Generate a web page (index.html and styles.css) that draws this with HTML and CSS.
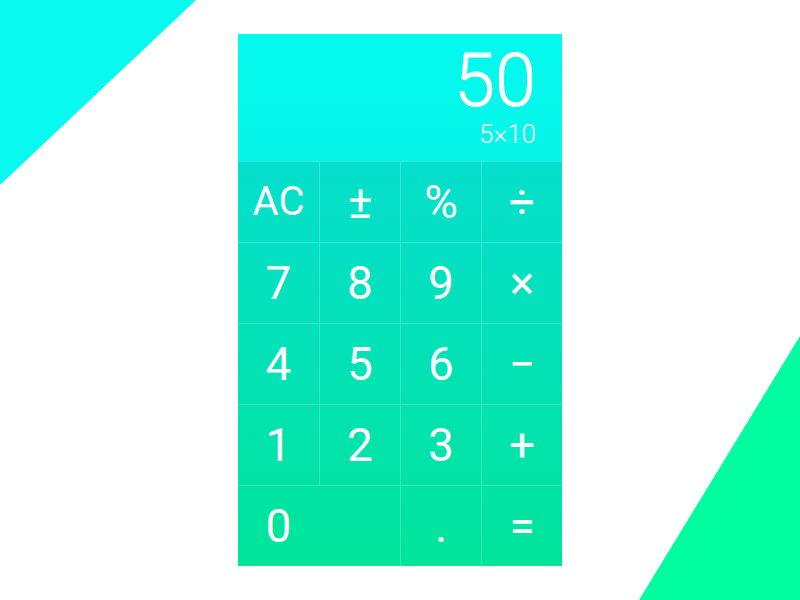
FILE: index.html
```html
<!DOCTYPE html>
<html lang="en">
<head>
<meta charset="utf-8">
<title>Calculator</title>
<link rel="stylesheet" href="styles.css">
</head>
<body>
<svg class="backdrop" width="800" height="600" viewBox="0 0 800 600" aria-hidden="true">
  <polygon points="0,0 196,0 0,185" fill="#07F9F0"/>
  <polygon points="800,336 800,600 639,600" fill="#00FEA0"/>
</svg>
<main class="calc">
  <section class="display">
    <div class="result">50</div>
    <div class="expr">5×10</div>
  </section>
  <section class="keys">
    <button class="key key-ac">AC</button>
    <button class="key">±</button>
    <button class="key">%</button>
    <button class="key">÷</button>
    <button class="key">7</button>
    <button class="key">8</button>
    <button class="key">9</button>
    <button class="key">×</button>
    <button class="key">4</button>
    <button class="key">5</button>
    <button class="key">6</button>
    <button class="key">−</button>
    <button class="key">1</button>
    <button class="key">2</button>
    <button class="key">3</button>
    <button class="key">+</button>
    <button class="key key-zero"><span class="zero-label">0</span></button>
    <button class="key">.</button>
    <button class="key">=</button>
  </section>
</main>
</body>
</html>
```

FILE: styles.css
```css
html, body {
  margin: 0;
  padding: 0;
}

body {
  width: 800px;
  height: 600px;
  background: #ffffff;
  position: relative;
  overflow: hidden;
  font-family: Roboto, "Liberation Sans", sans-serif;
}

.backdrop {
  position: absolute;
  left: 0;
  top: 0;
  z-index: 0;
}

.calc {
  position: relative;
  z-index: 1;
  width: 326px;
  height: 534px;
  margin: 33px 0 0 237px;
  display: flex;
  flex-direction: column;
  box-sizing: border-box;
  border: 1px solid rgba(255, 255, 255, 0.35);
  color: #ffffff;
}

.display {
  height: 127px;
  box-sizing: border-box;
  padding: 12px 26px 11px 20px;
  display: flex;
  flex-direction: column;
  align-items: flex-end;
  background: linear-gradient(180deg, #03FAEF 0%, #06F5E8 100%);
}

.result {
  font-size: 74px;
  line-height: 0.95;
  font-weight: 300;
  -webkit-text-stroke: 0.8px #ffffff;
}

.expr {
  margin-top: 7px;
  font-size: 26px;
  line-height: 0.9;
  font-weight: 300;
}

.keys {
  flex: 1;
  display: grid;
  grid-template-columns: repeat(4, 1fr);
  grid-template-rows: repeat(5, 1fr);
  background: linear-gradient(180deg, #05DFCC 0%, #03E2B6 50%, #00E59A 100%);
}

.key {
  appearance: none;
  background: transparent;
  border: 0;
  border-top: 1px solid rgba(255, 255, 255, 0.2);
  border-left: 1px solid rgba(255, 255, 255, 0.2);
  margin: 0;
  padding: 0;
  color: #ffffff;
  font-family: Roboto, "Liberation Sans", sans-serif;
  font-size: 46px;
  font-weight: 400;
  line-height: 1;
  display: flex;
  align-items: center;
  justify-content: center;
}

.key:nth-child(4n + 1) {
  border-left: 0;
}

.key-ac {
  font-size: 40px;
}

.key-zero {
  grid-column: span 2;
  justify-content: flex-start;
}

.zero-label {
  width: 50%;
  text-align: center;
}
```
